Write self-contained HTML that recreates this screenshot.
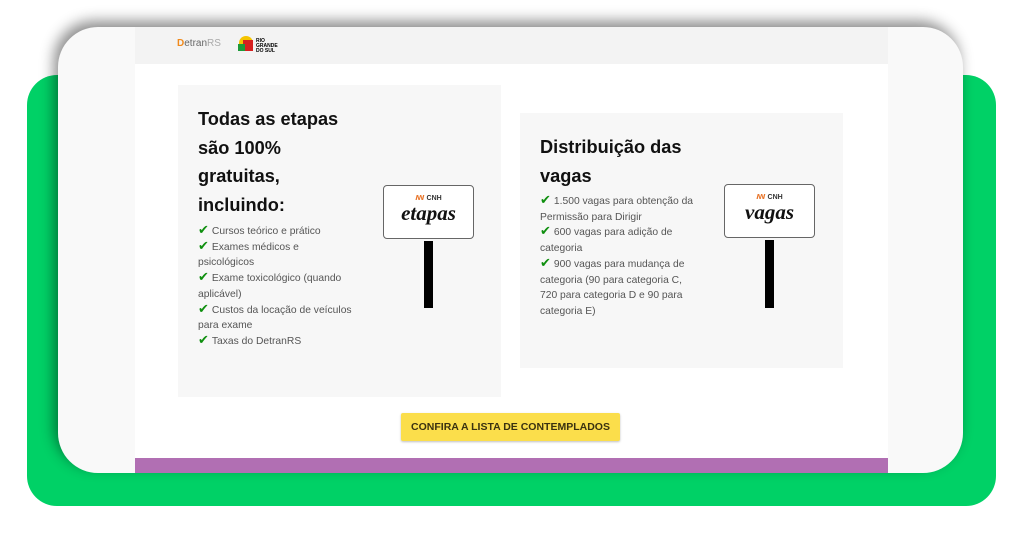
<!DOCTYPE html><html><head><style>
*{margin:0;padding:0;box-sizing:border-box}
body{width:1024px;height:536px;background:#fff;position:relative;overflow:hidden;font-family:"Liberation Sans","DejaVu Sans",sans-serif}
.green{position:absolute;left:27px;top:75px;width:969px;height:431px;background:#00d166;border-radius:30px}
.card{position:absolute;left:58px;top:27px;width:905px;height:446px;background:#f9f9f9;border-radius:40px;box-shadow:-4px -6px 14px rgba(0,0,0,.45);overflow:hidden}
.page{position:absolute;left:77px;top:0;width:753px;height:446px;background:#fff}
.hdr{height:37px;background:#f3f3f3}
.box{position:absolute;background:#f7f7f7}
h2{font-size:18.2px;font-weight:bold;color:#111;line-height:28.5px}
ul{list-style:none;font-size:10.3px;color:#555;line-height:15.7px;margin-top:5px}
.ck{color:#0f8f0f;font-weight:bold;font-size:13px;margin-right:3px;line-height:10px}
.sign{position:absolute;width:91px;height:54px;background:#fff;border:1px solid #666;border-radius:4px;text-align:center}
.sign .t{font-family:"Liberation Serif",serif;font-style:italic;font-weight:bold;font-size:21px;color:#111;line-height:22px}
.sign .c{font-size:7px;color:#333;margin-top:8px;font-weight:bold}
.pole{position:absolute;width:9px;background:#000}
.btn{position:absolute;left:266px;top:386px;width:219px;height:28px;background:#fbde4b;border-radius:2px;box-shadow:0 1px 2px rgba(0,0,0,.25);font-size:10.5px;font-weight:bold;color:#3a3210;text-align:center;line-height:28px}
.purple{position:absolute;left:0;top:431px;width:753px;height:15px;background:#b16fb3}
</style></head><body>
<div class="green"></div>
<div class="card"><div class="page">
<div class="hdr"><div style="position:absolute;left:42px;top:11px;font-size:10px;color:#666"><span style="color:#f08a1c;font-weight:bold">D</span>etran<span style="color:#aaa">RS</span></div>
<div style="position:absolute;left:104px;top:9px;width:14px;height:14px;background:#f5c400;border-radius:7px 7px 2px 2px"></div><div style="position:absolute;left:108px;top:13px;width:10px;height:11px;background:#d62020"></div><div style="position:absolute;left:103px;top:17px;width:7px;height:7px;background:#1e9a3a"></div>
<div style="position:absolute;left:121px;top:12px;font-size:5px;font-weight:bold;line-height:5px">RIO<br>GRANDE<br>DO SUL</div></div>
<div class="box" style="left:43px;top:58px;width:323px;height:312px;padding:20px 0 0 20px">
<h2>Todas as etapas<br>são 100%<br>gratuitas,<br>incluindo:</h2>
<ul><li><span class="ck">✔</span>Cursos teórico e prático</li><li><span class="ck">✔</span>Exames médicos e<br>psicológicos</li><li><span class="ck">✔</span>Exame toxicológico (quando<br>aplicável)</li><li><span class="ck">✔</span>Custos da locação de veículos<br>para exame</li><li><span class="ck">✔</span>Taxas do DetranRS</li></ul>
<div class="sign" style="left:205px;top:100px"><div class="c"><span style="color:#e8752a">ꟿ</span> CNH</div><div class="t">etapas</div></div>
<div class="pole" style="left:246px;top:156px;height:67px"></div>
</div>
<div class="box" style="left:385px;top:86px;width:323px;height:255px;padding:20px 0 0 20px">
<h2>Distribuição das<br>vagas</h2>
<ul style="margin-top:4px"><li><span class="ck">✔</span>1.500 vagas para obtenção da<br>Permissão para Dirigir</li><li><span class="ck">✔</span>600 vagas para adição de<br>categoria</li><li><span class="ck">✔</span>900 vagas para mudança de<br>categoria (90 para categoria C,<br>720 para categoria D e 90 para<br>categoria E)</li></ul>
<div class="sign" style="left:204px;top:71px"><div class="c"><span style="color:#e8752a">ꟿ</span> CNH</div><div class="t">vagas</div></div>
<div class="pole" style="left:245px;top:127px;height:68px"></div>
</div>
<div class="btn">CONFIRA A LISTA DE CONTEMPLADOS</div>
<div class="purple"></div>
</div></div>
</body></html>
